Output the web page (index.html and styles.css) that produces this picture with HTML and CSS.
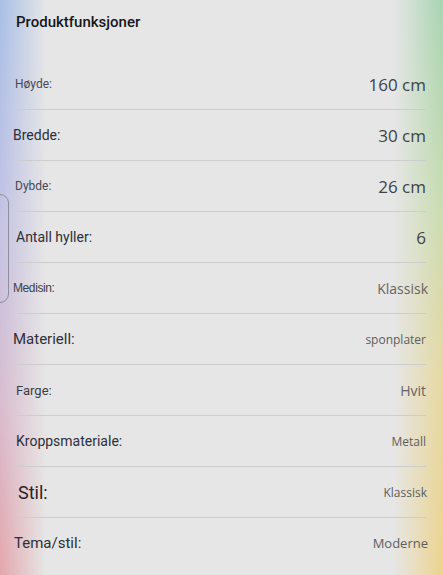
FILE: index.html
```html
<!DOCTYPE html>
<html lang="no">
<head>
    <meta charset="UTF-8">
    <meta name="viewport" content="width=device-width, initial-scale=1.0">
    <title>Produktfunksjoner</title>
    <link rel="stylesheet" href="styles.css">
</head>
<body>
    <div class="side-card"></div>

    <div class="sheet">
        <h1 class="title">Produktfunksjoner</h1>

        <ul class="specs">
            <li class="row"><span class="label label-sm">Høyde:</span><span class="value value-lg">160 cm</span></li>
            <li class="row"><span class="label label-md shift-2">Bredde:</span><span class="value value-lg">30 cm</span></li>
            <li class="row"><span class="label label-sm">Dybde:</span><span class="value value-lg">26 cm</span></li>
            <li class="row"><span class="label label-md">Antall hyller:</span><span class="value value-lg">6</span></li>
            <li class="row"><span class="label label-narrow shift-2">Medisin:</span><span class="value value-md push-2">Klassisk</span></li>
            <li class="row"><span class="label label-lg shift-2">Materiell:</span><span class="value value-sm">sponplater</span></li>
            <li class="row"><span class="label label-sm2">Farge:</span><span class="value value-md">Hvit</span></li>
            <li class="row"><span class="label label-md">Kroppsmateriale:</span><span class="value value-sm">Metall</span></li>
            <li class="row"><span class="label label-xl">Stil:</span><span class="value value-sm push-1">Klassisk</span></li>
            <li class="row last"><span class="label label-lg shift-1">Tema/stil:</span><span class="value value-sm2 push-2">Moderne</span></li>
        </ul>
    </div>
</body>
</html>
```

FILE: styles.css
```css
html, body {
    height: 100%;
}

body {
    margin: 0;
    font-family: Roboto, 'Noto Sans', sans-serif;
    color: #30333d;
    background-color: #e6e6e6;
    background-image:
        linear-gradient(to right, rgba(230, 230, 230, 0) 0, #e6e6e6 46px, #e6e6e6 calc(100% - 50px), rgba(230, 230, 230, 0) 100%),
        linear-gradient(to bottom, #a8bfe7 0, #c4c2e3 40%, #d9bccf 70%, #e4a6ab 100%),
        linear-gradient(to bottom, #a7d4b1 0, #c8dcb0 35%, #e6d9a2 65%, #edd38d 100%);
    background-size: 100% 100%, 50% 100%, 50% 100%;
    background-position: 0 0, left top, right top;
    background-repeat: no-repeat;
    overflow: hidden;
}

/* edge of a card that sits off screen to the left */
.side-card {
    position: absolute;
    left: -20px;
    top: 194px;
    width: 27px;
    height: 107px;
    border: 1px solid #8f8e9c;
    border-radius: 9px;
}

.sheet {
    padding: 0 17px;
}

.title {
    margin: 0 0 0 -1px;
    padding-top: 13px;
    height: 46px;
    font-size: 15px;
    font-weight: 500;
    color: #16171b;
}

.specs {
    list-style-type: none;
    margin: 0;
    padding: 0;
}

.row {
    display: flex;
    justify-content: space-between;
    align-items: center;
    height: 50px;
    border-bottom: 1px solid #cdcdcd;
}

.row.last {
    border-bottom: none;
}

.label {
    margin-left: -2px;
}

.label-sm {
    font-size: 12px;
    color: #454955;
}

.label-sm2 {
    font-size: 13px;
    margin-left: -1px;
    color: #3b3d45;
}

.label-md {
    font-size: 14px;
    margin-left: -1px;
    color: #2c2f3a;
}

.label-lg {
    font-size: 15px;
    color: #2f2f38;
}

.label-xl {
    font-size: 18px;
    margin-left: 1px;
    color: #2a2429;
}

.label-narrow {
    font-family: 'Liberation Sans Narrow', 'Liberation Sans', sans-serif;
    font-size: 12px;
    letter-spacing: -0.4px;
    color: #3d3f48;
}

.shift-1 {
    margin-left: -3px;
}

.shift-2 {
    margin-left: -4px;
}

.value {
    font-family: 'Open Sans', 'Noto Sans', sans-serif;
    color: #4a4a4a;
}

.value-lg {
    font-size: 17px;
    color: #3f4246;
}

.value-md {
    font-size: 14px;
    color: #666464;
}

.value-sm {
    font-size: 12px;
    color: #5f5d5b;
}

.value-sm2 {
    font-size: 13px;
    color: #5f5d5b;
}

.push-1 {
    margin-right: -1px;
}

.push-2 {
    margin-right: -2px;
}
```
